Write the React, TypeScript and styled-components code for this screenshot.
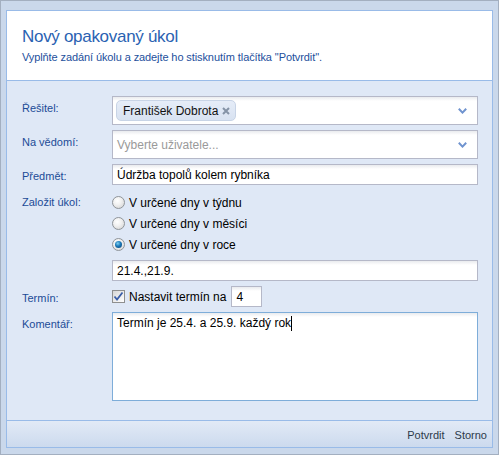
import React from 'react';
import styled, { createGlobalStyle } from 'styled-components';

const Global = createGlobalStyle`
  html, body { margin: 0; padding: 0; background: #fff; }
  body { font-family: "Liberation Sans", Arial, sans-serif; }
  * { box-sizing: border-box; }
`;

const Window = styled.div`
  width: 499px;
  height: 455px;
  border: 1px solid #a3afc0;
  background: #cad8eb;
  padding: 9px 5px 6px 5px;
  display: flex;
`;

const Panel = styled.div`
  flex: 1;
  border: 1px solid #99bbe8;
  display: flex;
  flex-direction: column;
`;

const Header = styled.div`
  height: 70px;
  flex: none;
  background: #fff;
  border-bottom: 1px solid #99bbe8;
  padding: 15px 15px 0 15px;
`;

const Title = styled.h1`
  margin: 0;
  font-size: 17px;
  line-height: 21px;
  letter-spacing: -0.3px;
  font-weight: normal;
  color: #2a62b2;
`;

const Subtitle = styled.p`
  margin: 3px 0 0 0;
  font-size: 11px;
  line-height: 14px;
  letter-spacing: -0.1px;
  color: #234f9c;
`;

const Form = styled.div`
  flex: 1;
  background: #dfe8f6;
  padding: 15px 14px 0 15px;
  display: grid;
  grid-template-columns: 90px 1fr;
  row-gap: 5px;
  align-content: start;
`;

const Label = styled.div`
  font-size: 11px;
  line-height: 13px;
  padding-top: 6px;
  color: #1c4b96;
`;

const Field = styled.div<{ $h: number; $focus?: boolean }>`
  height: ${(p) => p.$h}px;
  border: 1px solid ${(p) => (p.$focus ? '#7eadd9' : '#b5b8c8')};
  background: linear-gradient(to bottom, #e9ebee 0, #ffffff 4px);
  font-size: 12px;
  color: #000;
  display: flex;
  align-items: center;
  padding: 0 4px;
  position: relative;
`;

const ComboField = styled(Field)`
  padding: 0 3px;
`;

const Placeholder = styled.span`
  color: #9a9a9a;
  padding-left: 1px;
`;

const Token = styled.span`
  height: 21px;
  display: inline-flex;
  align-items: center;
  gap: 4px;
  padding: 0 5px 0 6px;
  border: 1px solid #c8d4e6;
  border-radius: 5px;
  background: linear-gradient(to bottom, #e6edf8, #d8e2f1);
  font-size: 12px;
  color: #111;
`;

const Chevron = styled.svg`
  position: absolute;
  right: 10px;
  top: 50%;
  margin-top: -3px;
`;

const RadioGroup = styled.div`
  height: 65px;
  padding-top: 2px;
  display: flex;
  flex-direction: column;
`;

const RadioRow = styled.label`
  height: 21px;
  display: flex;
  align-items: center;
  gap: 4px;
  font-size: 12px;
  color: #000;
`;

const RadioCircle = styled.span<{ $checked?: boolean }>`
  width: 13px;
  height: 13px;
  border-radius: 50%;
  border: 1px solid #8f9499;
  background: radial-gradient(circle at 40% 35%, #ffffff 0, #f1f1f1 40%, #cfcfcf 100%);
  display: flex;
  align-items: center;
  justify-content: center;
  flex: none;
  &::after {
    content: '';
    display: ${(p) => (p.$checked ? 'block' : 'none')};
    width: 7px;
    height: 7px;
    border-radius: 50%;
    background: radial-gradient(circle at 40% 35%, #7fd0f0 0, #1b78b8 45%, #0d3f6e 100%);
  }
`;

const CheckRow = styled.div`
  height: 21px;
  display: flex;
  align-items: center;
  font-size: 12px;
  color: #000;
`;

const CheckBox = styled.span`
  width: 13px;
  height: 13px;
  border: 1px solid #8e8f8f;
  background: linear-gradient(135deg, #d6d6d6, #ffffff);
  display: flex;
  align-items: center;
  justify-content: center;
  margin-right: 4px;
  flex: none;
`;

const NumberBox = styled(Field)`
  width: 31px;
  margin-left: 5px;
`;

const TextArea = styled.div`
  height: 89px;
  border: 1px solid #7eadd9;
  background: linear-gradient(to bottom, #e9ebee 0, #ffffff 4px);
  font-size: 12px;
  line-height: 15px;
  padding: 3px 4px;
  color: #000;
`;

const Caret = styled.span`
  display: inline-block;
  width: 1px;
  height: 15px;
  background: #000;
  vertical-align: top;
`;

const Footer = styled.div`
  height: 27px;
  flex: none;
  border-top: 1px solid #99bbe8;
  background: linear-gradient(to bottom, #e2eaf6, #ccdaee);
  display: flex;
  justify-content: flex-end;
  align-items: center;
  gap: 10px;
  padding: 1px 5px 0 0;
`;

const FooterButton = styled.span`
  font-size: 11px;
  color: #2d3a4a;
`;

const ChevronIcon = () => (
  <Chevron width="9" height="6" viewBox="0 0 9 6">
    <path d="M0.8 0.8 L4.5 4.6 L8.2 0.8" fill="none" stroke="#6f93cf" strokeWidth="2" />
  </Chevron>
);

export default function App() {
  return (
    <>
      <Global />
      <Window>
        <Panel>
          <Header>
            <Title>Nový opakovaný úkol</Title>
            <Subtitle>Vyplňte zadání úkolu a zadejte ho stisknutím tlačítka "Potvrdit".</Subtitle>
          </Header>
          <Form>
            <Label>Řešitel:</Label>
            <ComboField $h={29}>
              <Token>
                František Dobrota
                <svg width="8" height="8" viewBox="0 0 8 8">
                  <path d="M1 1 L7 7 M7 1 L1 7" stroke="#8593a6" strokeWidth="2" />
                </svg>
              </Token>
              <ChevronIcon />
            </ComboField>

            <Label>Na vědomí:</Label>
            <ComboField $h={29}>
              <Placeholder>Vyberte uživatele...</Placeholder>
              <ChevronIcon />
            </ComboField>

            <Label>Předmět:</Label>
            <Field $h={21}>Údržba topolů kolem rybníka</Field>

            <Label>Založit úkol:</Label>
            <RadioGroup>
              <RadioRow>
                <RadioCircle />V určené dny v týdnu
              </RadioRow>
              <RadioRow>
                <RadioCircle />V určené dny v měsíci
              </RadioRow>
              <RadioRow>
                <RadioCircle $checked />V určené dny v roce
              </RadioRow>
            </RadioGroup>

            <Label />
            <Field $h={21}>21.4.,21.9.</Field>

            <Label>Termín:</Label>
            <CheckRow>
              <CheckBox>
                <svg width="11" height="11" viewBox="0 0 11 11">
                  <path d="M1.5 5.5 L4 8.5 L9.5 1.5" fill="none" stroke="#3a5ea8" strokeWidth="1.8" />
                </svg>
              </CheckBox>
              Nastavit termín na
              <NumberBox $h={21}>4</NumberBox>
            </CheckRow>

            <Label>Komentář:</Label>
            <TextArea>
              Termín je 25.4. a 25.9. každý rok
              <Caret />
            </TextArea>
          </Form>
          <Footer>
            <FooterButton>Potvrdit</FooterButton>
            <FooterButton>Storno</FooterButton>
          </Footer>
        </Panel>
      </Window>
    </>
  );
}
